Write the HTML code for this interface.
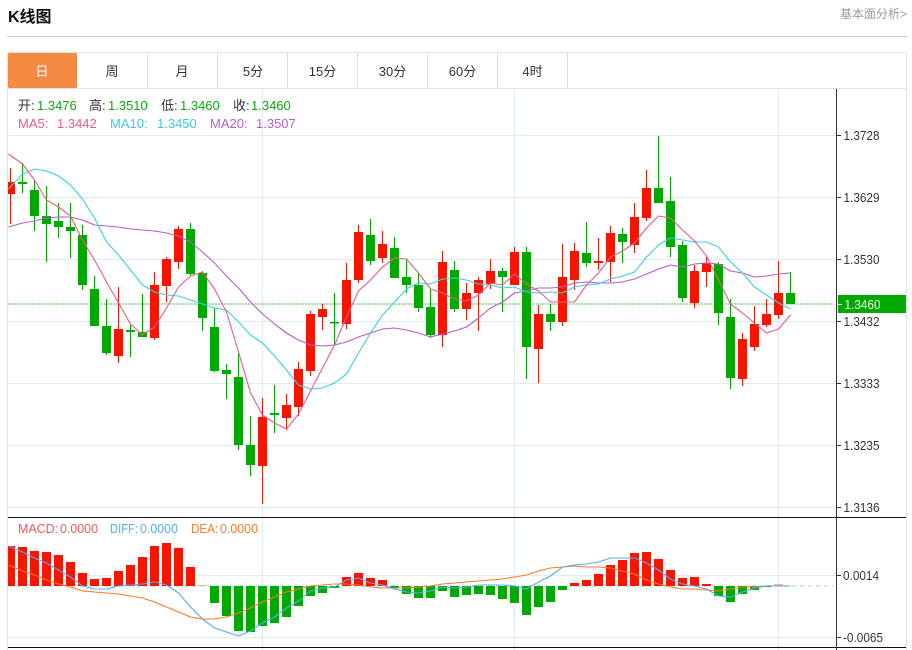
<!DOCTYPE html>
<html lang="zh">
<head>
<meta charset="utf-8">
<title>K线图</title>
<style>
html,body{margin:0;padding:0;background:#fff;}
body{width:912px;height:650px;overflow:hidden;position:relative;font-family:"Liberation Sans","Noto Sans CJK SC",sans-serif;}
svg{position:absolute;left:0;top:0;}
text{font-family:"Liberation Sans","Noto Sans CJK SC",sans-serif;}
.tab{font-size:13px;fill:#333;text-anchor:middle;}
.ax{font-size:13px;fill:#333;}
</style>
</head>
<body>
<svg width="912" height="650" viewBox="0 0 912 650">
<!-- header -->
<text x="8" y="22" font-size="16" font-weight="bold" fill="#111">K线图</text>
<text x="840" y="18" font-size="12" fill="#999">基本面分析&gt;</text>
<rect x="7" y="36" width="900" height="1" fill="#ccc"/>

<!-- frame -->
<path d="M7.5 52.5H906.5V650M7.5 52.5V650M7 88.5H907" fill="none" stroke="#e0e2e4" stroke-width="1"/>
<rect x="8" y="53" width="69" height="35" rx="1.5" fill="#f58b42"/>
<path d="M147.5 53V88M217.5 53V88M287.5 53V88M357.5 53V88M427.5 53V88M497.5 53V88M567.5 53V88" stroke="#ddd" fill="none"/>
<text class="tab" x="42" y="76" style="fill:#fff">日</text>
<text class="tab" x="112" y="76">周</text>
<text class="tab" x="182" y="76">月</text>
<text class="tab" x="253" y="76">5分</text>
<text class="tab" x="322.500" y="76">15分</text>
<text class="tab" x="392.500" y="76">30分</text>
<text class="tab" x="462.500" y="76">60分</text>
<text class="tab" x="532.500" y="76">4时</text>

<!-- grid -->
<path d="M8 135.5H836M8 197.5H836M8 259.5H836M8 321.5H836M8 383.5H836M8 445.5H836M8 507.5H836M8 575.5H836M8 637.5H836M262.5 89V650M514.5 89V650M778.5 89V650" fill="none" stroke="#e3ebf2"/>

<!-- current price dotted -->
<path d="M8 304H834" stroke="#a2e2a2" stroke-width="2" stroke-dasharray="2 1" fill="none"/>
<path d="M8 586H834" stroke="#bde4f4" stroke-width="1.6" stroke-dasharray="4 4" fill="none"/>

<!-- candle wicks -->
<path fill="none" stroke="#f51500" d="M10.5 168V224M118.5 287V363M154.5 272V340M166.5 257V302M178.5 226V269M262.5 398V504M286.5 394V430M298.5 362V416M310.5 311V376M322.5 304V330M346.5 263V329M358.5 225V283M382.5 231V263M442.5 251V347M466.5 283V320M478.5 277V331M490.5 259V289M514.5 247V285M538.5 305V383M562.5 244V326M574.5 243V290M598.5 238V270M610.5 226V282M634.5 203V253M646.5 170V221M694.5 265V308M706.5 257V287M742.5 333V386M754.5 306V351M766.5 299V327M778.5 261V319"/>
<path fill="none" stroke="#00a800" d="M22.5 163V193M34.5 180V231M46.5 186V262M58.5 203V238M70.5 203V258M82.5 225V290M94.5 276V326M106.5 299V355M130.5 325V357M142.5 294V337M190.5 223V276M202.5 271V331M214.5 308V372M226.5 364V399M238.5 351V450M250.5 416V476M274.5 385V433M334.5 293V345M370.5 219V265M394.5 237V278M406.5 259V293M418.5 273V312M430.5 289V338M454.5 261V312M502.5 268V312M526.5 247V379M550.5 304V331M586.5 222V267M622.5 228V263M658.5 136V203M670.5 177V257M682.5 241V302M718.5 262V325M730.5 299V389M790.5 272V304"/>
<!-- candle bodies -->
<path fill="#f51500" d="M8 182h7V194h-7zM114 329h9V356h-9zM150 285h9V338h-9zM162 259h9V286h-9zM174 229h9V262h-9zM258 417h9V466h-9zM282 405h9V418h-9zM294 369h9V407h-9zM306 314h9V371h-9zM318 309h9V317h-9zM342 280h9V324h-9zM354 232h9V280h-9zM378 244h9V258h-9zM438 262h9V335h-9zM462 293h9V309h-9zM474 280h9V293h-9zM486 271h9V284h-9zM510 252h9V285h-9zM534 314h9V349h-9zM558 277h9V322h-9zM570 251h9V280h-9zM594 261h9V263h-9zM606 233h9V262h-9zM630 217h9V245h-9zM642 188h9V218h-9zM690 271h9V303h-9zM702 263h9V272h-9zM738 339h9V379h-9zM750 324h9V347h-9zM762 314h9V325h-9zM774 293h9V315h-9z"/>
<path fill="#00a800" d="M18 182h9V184h-9zM30 190h9V216h-9zM42 216h9V224h-9zM54 221h9V227h-9zM66 227h9V231h-9zM78 235h9V285h-9zM90 289h9V326h-9zM102 326h9V353h-9zM126 330h9V332h-9zM138 332h9V337h-9zM186 229h9V274h-9zM198 273h9V318h-9zM210 327h9V371h-9zM222 370h9V374h-9zM234 377h9V445h-9zM246 445h9V465h-9zM270 413h9V415h-9zM330 322h9V323.500h-9zM366 235h9V261h-9zM390 248h9V278h-9zM402 277h9V285h-9zM414 285h9V308h-9zM426 307h9V335h-9zM450 270h9V309h-9zM498 271h9V277h-9zM522 252h9V347h-9zM546 314h9V322h-9zM582 253h9V263h-9zM618 234h9V242h-9zM654 188h9V203h-9zM666 201h9V247h-9zM678 245h9V298h-9zM714 264h9V313h-9zM726 317h9V378h-9zM786 293h9V304h-9z"/>

<!-- MA lines -->
<g fill="none" stroke-width="1.1" stroke-linejoin="round" transform="translate(.5 0)">
<polyline stroke="#b65ccb" points="8,227 22,223 34,221 46,218 58,217 70,217 82,220 94,225 106,226 118,227 130,229 142,230 154,231 166,233 178,236 190,242 202,252 214,263 226,276 238,288 250,302 262,314 274,324 286,333 298,340 310,345 322,346 334,345 346,342 358,337 370,333 382,329 394,328 406,330 418,333 430,337 442,334 454,331 466,327 478,318 490,308 502,302 514,293 526,291 538,288 550,288 562,287 574,283 586,282 598,283 610,283 622,282 634,279 646,274 658,269 670,265 682,267 694,264 706,263 718,264 730,271 742,273 754,277 766,276 778,274 790,273"/>
<polyline stroke="#3ccfe3" points="8,189 22,174 34,169 46,171 58,176 70,185 82,199 94,218 106,242 118,255 130,270 142,285 154,292 166,295 178,296 190,300 202,304 214,308 226,310 238,322 250,335 262,343 274,356 286,370 298,385 310,389 322,388 334,383 346,374 358,353 370,333 382,315 394,302 406,289 418,283 430,284 442,279 454,278 466,280 478,284 490,285 502,288 514,287 526,292 538,293 550,292 562,293 574,287 586,285 598,284 610,279 622,276 634,272 646,257 658,245 670,238 682,240 694,242 706,242 718,247 730,262 742,273 754,287 766,295 778,303 790,309"/>
<polyline stroke="#ec5a8c" points="8,154 22,164 34,180 46,200 58,207 70,216 82,240 94,260 106,282 118,303 130,324 142,335 154,327 166,308 178,287 190,276 202,272 214,289 226,312 238,352 250,393 262,415 274,423 286,429 298,414 310,391 322,368 334,345 346,317 358,291 370,280 382,267 394,258 406,259 418,273 430,289 442,293 454,299 466,301 478,295 490,283 502,285 514,274 526,284 538,291 550,302 562,302 574,302 586,285 598,273 610,257 622,251 634,243 646,228 658,216 670,218 682,230 694,241 706,256 718,280 730,304 742,313 754,323 766,333 778,329 790,315"/>
</g>

<!-- separators -->
<rect x="8" y="517" width="898" height="1" fill="#111"/>
<rect x="8" y="647" width="898" height="1" fill="#111"/>

<!-- MACD bars -->
<path fill="#f51500" d="M8 546h7V586h-7zM18 547h9V586h-9zM30 551h9V586h-9zM42 552h9V586h-9zM54 555h9V586h-9zM66 562h9V586h-9zM78 573h9V586h-9zM90 579h9V586h-9zM102 578h9V586h-9zM114 571h9V586h-9zM126 565h9V586h-9zM138 557h9V586h-9zM150 546h9V586h-9zM162 543h9V586h-9zM174 548h9V586h-9zM186 567h9V586h-9zM342 577h9V586h-9zM354 573h9V586h-9zM366 578h9V586h-9zM378 580h9V586h-9zM570 583h9V586h-9zM582 580h9V586h-9zM594 574h9V586h-9zM606 565h9V586h-9zM618 560h9V586h-9zM630 553h9V586h-9zM642 552h9V586h-9zM654 559h9V586h-9zM666 570h9V586h-9zM678 578h9V586h-9zM690 577h9V586h-9zM702 584h9V586h-9z"/>
<path fill="#f4b0a8" d="M198 585h9V586h-9zM774 584h9V586h-9z"/>
<path fill="#00a800" d="M210 586h9V603h-9zM222 586h9V616h-9zM234 586h9V631h-9zM246 586h9V632h-9zM258 586h9V626h-9zM270 586h9V623h-9zM282 586h9V617h-9zM294 586h9V606h-9zM306 586h9V596h-9zM318 586h9V593h-9zM330 586h9V588h-9zM390 586h9V588h-9zM402 586h9V594h-9zM414 586h9V598h-9zM426 586h9V598h-9zM438 586h9V591h-9zM450 586h9V597h-9zM462 586h9V595h-9zM474 586h9V594h-9zM486 586h9V595h-9zM498 586h9V599h-9zM510 586h9V603h-9zM522 586h9V615h-9zM534 586h9V607h-9zM546 586h9V602h-9zM558 586h9V590h-9zM714 586h9V596h-9zM726 586h9V602h-9zM738 586h9V594h-9zM750 586h9V590h-9zM762 586h9V587h-9z"/>

<!-- MACD lines -->
<g fill="none" stroke-width="1.1" stroke-linejoin="round" transform="translate(.5 0)">
<polyline stroke="#f97a2a" points="8,565 22,571 34,575 46,580 58,584 70,587 82,591 94,592 106,593 118,594 130,596 142,598 154,602 166,607 178,612 190,617 202,619 214,619 226,617 238,613 250,608 262,602 274,597 286,592 298,589 310,586 322,585 334,584 346,584 358,585 370,587 382,588 394,588 406,588 418,587 430,586 442,584 454,583 466,582 478,581 490,580 502,579 514,577 526,575 538,571 550,568 562,567 574,566 586,567 598,567 610,568 622,571 634,574 646,580 658,584 670,587 682,589 694,589 706,590 718,591 730,589 742,587 754,587 766,586 778,586 790,586"/>
<polyline stroke="#55acf0" points="8,546 22,552 34,558 46,563 58,570 70,577 82,586 94,589 106,589 118,586 130,585 142,584 154,582 166,585 178,593 190,607 202,619 214,628 226,632 238,636 250,631 262,623 274,617 286,608 298,601 310,591 322,588 334,587 346,580 358,578 370,583 382,585 394,589 406,592 418,593 430,591 442,587 454,588 466,587 478,585 490,585 502,585 514,586 526,589 538,582 550,576 562,567 574,565 586,564 598,562 610,558 622,558 634,558 646,563 658,570 670,579 682,584 694,586 706,589 718,596 730,597 742,592 754,588 766,586 778,586 790,586"/>
</g>

<!-- axis -->
<rect x="836" y="89" width="1" height="561" fill="#333"/>
<path d="M837 135.500h4M837 197.500h4M837 259.500h4M837 321.500h4M837 383.500h4M837 445.500h4M837 507.500h4M837 575.500h4M837 637.500h4" stroke="#333" fill="none"/>
<text class="ax" x="843.500" y="140" textLength="36" lengthAdjust="spacingAndGlyphs">1.3728</text>
<text class="ax" x="843.500" y="202" textLength="36" lengthAdjust="spacingAndGlyphs">1.3629</text>
<text class="ax" x="843.500" y="264" textLength="36" lengthAdjust="spacingAndGlyphs">1.3530</text>
<text class="ax" x="843.500" y="326" textLength="36" lengthAdjust="spacingAndGlyphs">1.3432</text>
<text class="ax" x="843.500" y="388" textLength="36" lengthAdjust="spacingAndGlyphs">1.3333</text>
<text class="ax" x="843.500" y="450" textLength="36" lengthAdjust="spacingAndGlyphs">1.3235</text>
<text class="ax" x="843.500" y="512" textLength="36" lengthAdjust="spacingAndGlyphs">1.3136</text>
<text class="ax" x="843" y="580" textLength="36" lengthAdjust="spacingAndGlyphs">0.0014</text>
<text class="ax" x="843" y="642" textLength="40" lengthAdjust="spacingAndGlyphs">-0.0065</text>
<rect x="838" y="295" width="68" height="18" fill="#00a800"/>
<rect x="838" y="304" width="4" height="1" fill="#fff"/>
<text class="ax" x="844.500" y="309" style="fill:#fff" textLength="36" lengthAdjust="spacingAndGlyphs">1.3460</text>

<!-- legends -->
<g font-size="13">
<text x="18" y="110" fill="#333">开:</text><text x="37" y="110" fill="#0aa80a">1.3476</text>
<text x="89" y="110" fill="#333">高:</text><text x="108" y="110" fill="#0aa80a">1.3510</text>
<text x="161" y="110" fill="#333">低:</text><text x="180" y="110" fill="#0aa80a">1.3460</text>
<text x="233" y="110" fill="#333">收:</text><text x="251" y="110" fill="#0aa80a">1.3460</text>
<text x="18" y="128" fill="#ec5a8c">MA5:</text><text x="57" y="128" fill="#ec5a8c">1.3442</text>
<text x="110" y="128" fill="#3cc8e0">MA10:</text><text x="157" y="128" fill="#3cc8e0">1.3450</text>
<text x="210" y="128" fill="#b65ccb">MA20:</text><text x="256" y="128" fill="#b65ccb">1.3507</text>
<text x="18" y="533" fill="#f15a5a" textLength="40" lengthAdjust="spacingAndGlyphs">MACD:</text><text x="60" y="533" fill="#f15a5a" textLength="38" lengthAdjust="spacingAndGlyphs">0.0000</text>
<text x="110" y="533" fill="#55acf0" textLength="28" lengthAdjust="spacingAndGlyphs">DIFF:</text><text x="140" y="533" fill="#55acf0" textLength="38" lengthAdjust="spacingAndGlyphs">0.0000</text>
<text x="191" y="533" fill="#f97a2a" textLength="27" lengthAdjust="spacingAndGlyphs">DEA:</text><text x="220" y="533" fill="#f97a2a" textLength="38" lengthAdjust="spacingAndGlyphs">0.0000</text>
</g>
</svg>
</body>
</html>
